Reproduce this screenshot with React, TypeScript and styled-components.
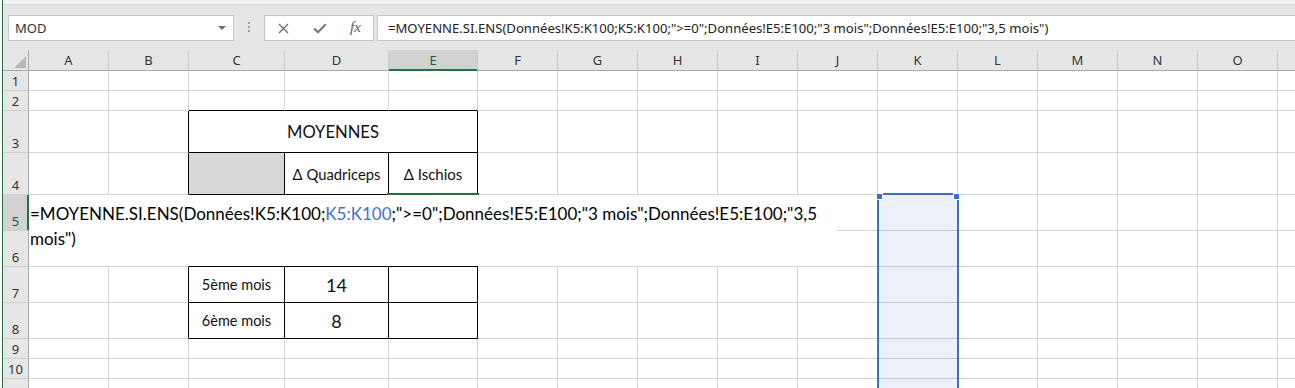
import React from 'react';
import styled, { createGlobalStyle } from 'styled-components';

const GlobalStyle = createGlobalStyle`
  html, body { margin: 0; padding: 0; background: #fff; overflow: hidden; }
  body { font-family: 'Noto Sans', sans-serif; }
  *, *::before, *::after { box-sizing: border-box; }
`;

const GREEN = '#217346';
const BLUE = '#3b6dc5';
const CELL_FONT = "Lato, 'Open Sans', sans-serif";
const UI_FONT = "'Noto Sans', 'Open Sans', sans-serif";

const COLS = ['A', 'B', 'C', 'D', 'E', 'F', 'G', 'H', 'I', 'J', 'K', 'L', 'M', 'N', 'O', ''];
const WIDTHS = [80, 80, 96, 104, 89, 80, 80, 80, 80, 80, 80, 80, 80, 80, 80, 80];
const ROWS = [
  { n: 1, h: 20 }, { n: 2, h: 20 }, { n: 3, h: 42 }, { n: 4, h: 42 }, { n: 5, h: 36 },
  { n: 6, h: 36 }, { n: 7, h: 36 }, { n: 8, h: 36 }, { n: 9, h: 20 }, { n: 10, h: 20 }, { n: 11, h: 20 },
];

type CellData = { text?: string; span?: number; size?: number; fill?: string };
const CONTENT: Record<string, CellData> = {
  C3: { text: 'MOYENNES', span: 3, size: 16.6 },
  C4: { fill: '#dad7db' },
  D4: { text: 'Δ Quadriceps', size: 14.8 },
  E4: { text: 'Δ Ischios', size: 15 },
  C7: { text: '5ème mois', size: 14.5 },
  D7: { text: '14', size: 18 },
  C8: { text: '6ème mois', size: 14.5 },
  D8: { text: '8', size: 18 },
};

const Frame = styled.div`
  margin-left: 2px;
  border-left: 1px solid ${GREEN};
  height: 388px;
  overflow: hidden;
  display: flex;
  flex-direction: column;
`;

const TitleStrip = styled.div`
  height: 5px;
  flex: none;
  background: #f3f2f6;
  border-bottom: 1px solid #d8d8d8;
`;

const FormulaBar = styled.div`
  height: 45px;
  flex: none;
  background: #e6e6e6;
  display: flex;
  align-items: flex-start;
  padding: 10px 0 0 5px;
`;

const Box = styled.div`
  height: 26px;
  background: #fff;
  border: 1px solid #c6c6c6;
  display: flex;
  align-items: center;
`;

const NameBox = styled(Box)`
  width: 226px;
  padding: 0 6px 0 6px;
  justify-content: space-between;
  font-family: ${UI_FONT};
  font-size: 13px;
  color: #333;
`;

const DropArrow = styled.span`
  width: 0;
  height: 0;
  border-left: 4px solid transparent;
  border-right: 4px solid transparent;
  border-top: 4px solid #6d6d6d;
  margin-right: 1px;
`;

const Grip = styled.div`
  width: 30px;
  height: 26px;
  display: flex;
  flex-direction: column;
  align-items: center;
  justify-content: center;
  gap: 2px;
  padding-bottom: 2px;
`;

const GripDot = styled.span`
  width: 2px;
  height: 2px;
  background: #9d9d9d;
`;

const IconBox = styled(Box)`
  width: 110px;
  padding-left: 13px;
`;

const IconSlot = styled.span<{ $gap: number; $w: number }>`
  width: ${p => p.$w}px;
  margin-left: ${p => p.$gap}px;
  display: flex;
  align-items: center;
  justify-content: center;
`;

const Fx = styled.span`
  font-family: 'Liberation Serif', 'DejaVu Serif', serif;
  font-style: italic;
  font-size: 15px;
  color: #5c5c5c;
  line-height: 1;
  margin-top: -2px;
`;

const FormulaBox = styled(Box)`
  flex: 1;
  margin-left: 3px;
  margin-right: -2px;
  padding-left: 10px;
  font-family: ${UI_FONT};
  font-size: 13.1px;
  color: #222;
  white-space: nowrap;
  overflow: hidden;
`;

const Sheet = styled.div`
  position: relative;
  flex: 1;
  overflow: hidden;
  display: grid;
  grid-template-columns: 26px ${WIDTHS.map(w => `${w}px`).join(' ')};
  grid-template-rows: 21px ${ROWS.map(r => `${r.h}px`).join(' ')};
  background: #fff;
`;

const Corner = styled.div`
  position: relative;
  background: #e6e6e6;
  border-right: 1px solid #ababab;
  border-bottom: 1px solid #ababab;
  &::after {
    content: '';
    position: absolute;
    right: 2px;
    bottom: 2px;
    width: 0;
    height: 0;
    border-left: 12px solid transparent;
    border-bottom: 12px solid #b7b7b7;
  }
`;

const ColHeader = styled.div<{ $active?: boolean }>`
  background: ${p => (p.$active ? '#d2d2d2' : '#e6e6e6')};
  border-right: 1px solid #cbcbcb;
  border-bottom: 1px solid ${p => (p.$active ? GREEN : '#ababab')};
  box-shadow: ${p => (p.$active ? `inset 0 -1px 0 ${GREEN}` : 'none')};
  display: flex;
  align-items: center;
  justify-content: center;
  font-family: ${UI_FONT};
  font-size: 13px;
  color: ${p => (p.$active ? '#1f5c3a' : '#333')};
`;

const RowHeader = styled.div<{ $active?: boolean }>`
  background: ${p => (p.$active ? '#d2d2d2' : '#e6e6e6')};
  border-right: 1px solid ${p => (p.$active ? GREEN : '#ababab')};
  box-shadow: ${p => (p.$active ? `inset -1px 0 0 ${GREEN}` : 'none')};
  border-bottom: 1px solid #cfcfcf;
  display: flex;
  align-items: flex-end;
  justify-content: center;
  font-family: ${UI_FONT};
  font-size: 13px;
  line-height: 18px;
  color: ${p => (p.$active ? '#1f5c3a' : '#333')};
`;

const Cell = styled.div<{ $rb?: boolean; $bb?: boolean; $fill?: string; $span?: number; $size?: number }>`
  grid-column: span ${p => p.$span ?? 1};
  background: ${p => p.$fill ?? '#fff'};
  border-right: 1px solid ${p => (p.$rb ? '#000' : '#d4d4d4')};
  border-bottom: 1px solid ${p => (p.$bb ? '#000' : '#d4d4d4')};
  display: flex;
  align-items: center;
  justify-content: center;
  font-family: ${CELL_FONT};
  font-size: ${p => p.$size ?? 15}px;
  color: #111;
  white-space: nowrap;
  overflow: hidden;
`;

const ActiveEdge = styled.div`
  position: absolute;
  left: 384px;
  top: 143px;
  width: 92px;
  height: 2px;
  background: ${GREEN};
`;

const EditOverlay = styled.div`
  position: absolute;
  left: 26px;
  top: 145px;
  width: 808px;
  height: 71px;
  background: #fff;
  padding: 6px 0 0 1px;
  font-family: ${CELL_FONT};
  font-size: 17px;
  line-height: 25px;
  color: #000;
  white-space: nowrap;
  overflow: hidden;
`;

const Ref = styled.span`
  color: #3f73cc;
`;

const RefRange = styled.div`
  position: absolute;
  left: 874px;
  top: 143px;
  width: 82px;
  height: 260px;
  border: 2px solid ${BLUE};
  background: rgba(59, 109, 197, 0.1);
`;

const Handle = styled.span<{ $side: 'left' | 'right' }>`
  position: absolute;
  top: -2px;
  ${p => p.$side}: -3px;
  width: 7px;
  height: 7px;
  background: ${BLUE};
  border: 1px solid #fff;
`;

const inTable = (c: number, r: number) => c >= 2 && c <= 4 && r >= 3 && r <= 8;

const CloseIcon = () => (
  <svg width="11" height="11" viewBox="0 0 11 11">
    <path d="M1 1 L10 10 M10 1 L1 10" stroke="#6b6b6b" strokeWidth="1.3" fill="none" />
  </svg>
);

const CheckIcon = () => (
  <svg width="14" height="11" viewBox="0 0 14 11">
    <path d="M1.2 5.6 L5 9.3 L12.8 1.3" stroke="#7a7a7a" strokeWidth="2.2" fill="none" />
  </svg>
);

export default function App() {
  const cells: React.ReactNode[] = [];
  ROWS.forEach(({ n }) => {
    cells.push(
      <RowHeader key={`rh${n}`} $active={n === 5}>
        {n === 11 ? '' : n}
      </RowHeader>
    );
    COLS.forEach((col, ci) => {
      if (n === 3 && (col === 'D' || col === 'E')) return;
      const key = `${col || 'P'}${n}`;
      const data = CONTENT[key] ?? {};
      const rb = inTable(ci, n) || (ci === 1 && n >= 3 && n <= 8);
      const bb = inTable(ci, n) || (ci >= 2 && ci <= 4 && n === 2);
      cells.push(
        <Cell key={key} $rb={rb} $bb={bb} $fill={data.fill} $span={data.span} $size={data.size}>
          {data.text}
        </Cell>
      );
    });
  });

  return (
    <>
      <GlobalStyle />
      <Frame>
        <TitleStrip />
        <FormulaBar>
          <NameBox>
            <span>MOD</span>
            <DropArrow />
          </NameBox>
          <Grip>
            <GripDot />
            <GripDot />
            <GripDot />
          </Grip>
          <IconBox>
            <IconSlot $gap={0} $w={11}>
              <CloseIcon />
            </IconSlot>
            <IconSlot $gap={24} $w={14}>
              <CheckIcon />
            </IconSlot>
            <IconSlot $gap={22} $w={13}>
              <Fx>fx</Fx>
            </IconSlot>
          </IconBox>
          <FormulaBox>
            =MOYENNE.SI.ENS(Données!K5:K100;K5:K100;"&gt;=0";Données!E5:E100;"3 mois";Données!E5:E100;"3,5 mois")
          </FormulaBox>
        </FormulaBar>
        <Sheet>
          <Corner />
          {COLS.map((c, i) => (
            <ColHeader key={`h${i}`} $active={c === 'E'}>
              {c}
            </ColHeader>
          ))}
          {cells}
          <ActiveEdge />
          <EditOverlay>
            <div>
              =MOYENNE.SI.ENS(Données!K5:K100;<Ref>K5:K100</Ref>;"&gt;=0";Données!E5:E100;"3 mois";Données!E5:E100;"3,5
            </div>
            <div>mois")</div>
          </EditOverlay>
          <RefRange>
            <Handle $side="left" />
            <Handle $side="right" />
          </RefRange>
        </Sheet>
      </Frame>
    </>
  );
}
